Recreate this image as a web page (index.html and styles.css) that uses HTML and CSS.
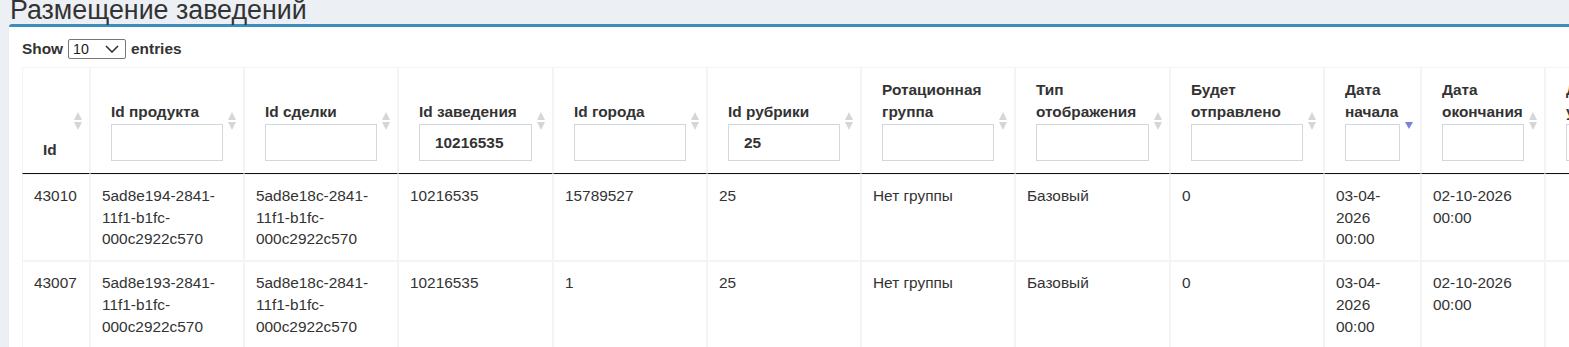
FILE: index.html
```html
<!DOCTYPE html>
<html lang="ru">
<head>
  <meta charset="UTF-8" />
  <meta name="viewport" content="width=device-width, initial-scale=1.0"/>
  <title>Размещение заведений</title>
  <link rel="stylesheet" href="styles.css">
</head>
<body>
  <h1 class="page-title">Размещение заведений</h1>
  <div class="box">
    <div class="length">
      <span>Show</span>
      <span class="select-wrap">
        <select>
          <option>10</option>
          <option>25</option>
          <option>50</option>
          <option>100</option>
        </select>
        <svg class="chevron" width="14" height="8" viewBox="0 0 14 8">
          <path d="M1 1 L7 7 L13 1" fill="none" stroke="#333" stroke-width="1.6"/>
        </svg>
      </span>
      <span>entries</span>
    </div>
    <table class="grid">
      <colgroup>
        <col class="c-id">
        <col class="c-wide">
        <col class="c-wide">
        <col class="c-wide2">
        <col class="c-wide">
        <col class="c-wide">
        <col class="c-wide">
        <col class="c-wide2">
        <col class="c-wide">
        <col class="c-start">
        <col class="c-end">
        <col class="c-last">
      </colgroup>
      <thead>
        <tr>
          <th class="sort">Id</th>
          <th class="sort">Id продукта<input type="text"></th>
          <th class="sort">Id сделки<input type="text"></th>
          <th class="sort">Id заведения<input type="text" value="10216535"></th>
          <th class="sort">Id города<input type="text"></th>
          <th class="sort">Id рубрики<input type="text" value="25"></th>
          <th class="sort">Ротационная группа<input type="text"></th>
          <th class="sort">Тип отображения<input type="text"></th>
          <th class="sort">Будет отправлено<input type="text"></th>
          <th class="sort-desc">Дата начала<input type="text"></th>
          <th class="sort">Дата окончания<input type="text"></th>
          <th class="sort">Дата удаления<input type="text"></th>
        </tr>
      </thead>
      <tbody>
        <tr>
          <td>43010</td>
          <td>5ad8e194-2841-11f1-b1fc-000c2922c570</td>
          <td>5ad8e18c-2841-11f1-b1fc-000c2922c570</td>
          <td>10216535</td>
          <td>15789527</td>
          <td>25</td>
          <td>Нет группы</td>
          <td>Базовый</td>
          <td>0</td>
          <td>03-04-2026 00:00</td>
          <td>02-10-2026 00:00</td>
          <td></td>
        </tr>
        <tr>
          <td>43007</td>
          <td>5ad8e193-2841-11f1-b1fc-000c2922c570</td>
          <td>5ad8e18c-2841-11f1-b1fc-000c2922c570</td>
          <td>10216535</td>
          <td>1</td>
          <td>25</td>
          <td>Нет группы</td>
          <td>Базовый</td>
          <td>0</td>
          <td>03-04-2026 00:00</td>
          <td>02-10-2026 00:00</td>
          <td></td>
        </tr>
      </tbody>
    </table>
  </div>
</body>
</html>
```

FILE: styles.css
```css
* {
  box-sizing: border-box;
}
html, body {
  overflow: hidden;
}
body {
  margin: 0;
  background: #ecf0f5;
  font-family: "Liberation Sans", Arial, sans-serif;
  font-size: 15.4px;
  line-height: 22px;
  color: #333;
}
.page-title {
  margin: 0;
  height: 24px;
  padding-left: 10px;
  font-size: 26.8px;
  font-weight: normal;
  line-height: 20px;
  color: #333;
}
.box {
  width: max-content;
  margin-left: 9px;
  padding: 12px 13px 20px;
  background: #fff;
  border-top: 3px solid #3c8dbc;
  border-radius: 3px;
  box-shadow: 0 1px 1px rgba(0, 0, 0, 0.1);
}
.length {
  display: flex;
  align-items: center;
  gap: 5px;
  height: 20px;
  margin-bottom: 8px;
  font-weight: bold;
}
.select-wrap {
  position: relative;
  display: block;
  width: 58px;
  height: 20px;
}
.select-wrap select {
  appearance: none;
  -webkit-appearance: none;
  display: block;
  width: 100%;
  height: 100%;
  padding: 0 0 0 4px;
  border: 1px solid #767676;
  border-radius: 2px;
  background: #fff;
  font-family: inherit;
  font-size: 14.2px;
  line-height: 18px;
  color: #222;
}
.chevron {
  position: absolute;
  right: 7px;
  top: 6px;
  pointer-events: none;
}
.grid {
  table-layout: fixed;
  width: 1663px;
  border-collapse: separate;
  border-spacing: 0;
}
.c-id { width: 68px; }
.c-wide { width: 154px; }
.c-wide2 { width: 155px; }
.c-start { width: 97px; }
.c-end { width: 124px; }
.c-last { width: 140px; }
.grid th,
.grid td {
  border: 1px solid #f4f4f4;
  text-align: left;
}
.grid th {
  position: relative;
  vertical-align: bottom;
  padding: 11px 20px 12px;
  font-weight: bold;
  border-bottom: 1px solid #111;
}
.grid td {
  vertical-align: top;
  padding: 10px 11px;
  line-height: 21.7px;
}
.grid th input {
  display: block;
  width: 100%;
  height: 37px;
  margin-top: 1px;
  padding: 0 15px;
  border: 1px solid #d2d6de;
  font: inherit;
  font-weight: bold;
  color: #333;
  background: #fff;
}
.sort::before,
.sort::after,
.sort-desc::after {
  content: "";
  position: absolute;
  right: 7px;
  border-left: 4px solid transparent;
  border-right: 4px solid transparent;
}
.sort::before {
  top: calc(50% - 9px);
  border-bottom: 8px solid #d6d6d6;
}
.sort::after {
  top: calc(50% + 1px);
  border-top: 8px solid #d6d6d6;
}
.sort-desc::after {
  top: calc(50% + 1px);
  border-top: 7px solid #7f80db;
}
```
